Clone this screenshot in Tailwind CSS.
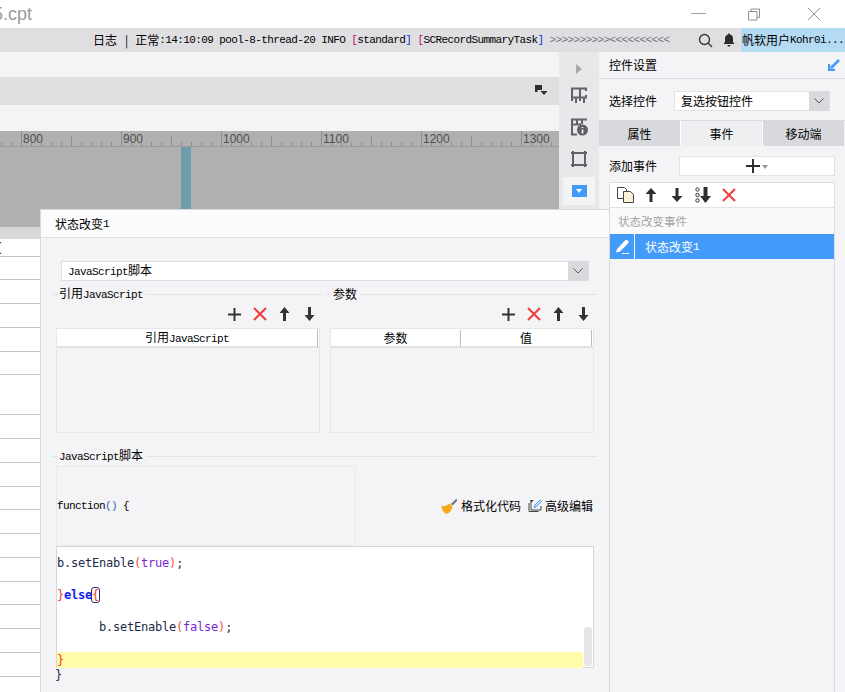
<!DOCTYPE html>
<html lang="zh">
<head>
<meta charset="utf-8">
<script src="https://cdn.jsdelivr.net/npm/@tailwindcss/browser@4"></script>
</head>
<body class="bg-white">
<div class="relative flex flex-col w-[845px] h-[692px] overflow-hidden bg-[#f4f4f6] text-black text-[12px] leading-[16px] font-['Noto_Sans_CJK_SC','Liberation_Sans',sans-serif]">

  <!-- title bar -->
  <div class="flex items-center h-[28px] bg-white shrink-0">
    <span class="-ml-[7px] text-[18px] leading-[28px] text-[#9a9a9a] font-['Liberation_Sans',sans-serif]">5.cpt</span>
    <div class="flex items-center ml-auto pr-[23px]">
      <svg class="w-[15px] h-[15px]" viewBox="0 0 15 15"><path d="M0 6.5h15" stroke="#a0a0a0" stroke-width="1"/></svg>
      <svg class="ml-[41px] w-[15px] h-[15px]" viewBox="0 0 15 15" fill="none" stroke="#909090"><path d="M1.5 4.500h8.500v8.500h-8.500z"/><path d="M4 4.500v-2.500h8.500v8.500h-2.500"/></svg>
      <svg class="ml-[45px] w-[15px] h-[15px]" viewBox="0 0 15 15" fill="none" stroke="#909090"><path d="M1 1l12 12M13 1L1 13"/></svg>
    </div>
  </div>

  <!-- log bar -->
  <div class="flex items-center h-[24px] bg-[#dfdfe1] shrink-0 whitespace-nowrap">
    <div class="flex items-center pl-[93px] w-[741px]">
      <span>日志</span><span class="mx-[8px]">|</span><span class="-ml-[1px]">正常</span>
      <span class="font-['Liberation_Mono'] text-[11px] tracking-[-0.6px] whitespace-pre">:14:10:09 pool-8-thread-20 INFO <span class="text-[#b0107c]">[</span>standard<span class="text-[#1c2ad0]">]</span> <span class="text-[#b0107c]">[</span>SCRecordSummaryTask<span class="text-[#1c2ad0]">]</span> <span class="text-[#77707f]">&gt;&gt;&gt;&gt;&gt;&gt;&gt;&gt;&gt;&gt;&lt;&lt;&lt;&lt;&lt;&lt;&lt;&lt;&lt;&lt;</span></span>
      <svg class="absolute left-[698px] top-[33px] w-[15px] h-[15px]" viewBox="0 0 15 15" fill="none" stroke="#333" stroke-width="1.300"><circle cx="6.500" cy="6.500" r="5"/><path d="M10.300 10.300l3.700 3.700"/></svg>
      <svg class="absolute left-[723px] top-[33px] w-[12px] h-[14px]" viewBox="0 0 12 14" fill="#2b2b2b"><path d="M6 0.500c.7 0 1 .5 1 1 2 .5 3 2 3 4v3.500l1.500 2h-11l1.500-2v-3.500c0-2 1-3.500 3-4 0-.5.300-1 1-1z"/><path d="M4.500 12h3c0 1-.6 1.600-1.500 1.600s-1.500-.6-1.500-1.600z"/></svg>
    </div>
    <div class="flex items-center h-full w-[104px] bg-[#b4dbf3] pl-[1px]">
      <span>帆软用户</span><span class="font-['Liberation_Mono'] text-[11px] tracking-[-0.6px]">Kohr0i...</span>
    </div>
  </div>

  <!-- main -->
  <div class="flex flex-1 min-h-0">
    <!-- left designer column -->
    <div class="flex flex-col w-[559px] shrink-0">
      <div class="h-[25px] bg-[#f4f4f6]"></div>
      <div class="flex items-center justify-end h-[28px] bg-[#dfdfe1] pr-[11px]">
        <svg class="w-[13px] h-[12px]" viewBox="0 0 13 12" fill="#2e2e2e"><path d="M0 0h7v2.500h-4.500v4.500h-2.500z"/><path d="M2 2h5v3h-5z"/><path d="M5.500 6h7l-3.500 4z"/></svg>
      </div>
      <div class="h-[26px] bg-[#f4f4f6]"></div>
      <!-- ruler -->
      <div class="relative flex h-[17px] bg-[#b0b0b0] border-b border-[#9a9a9a] overflow-hidden text-[#4f4f4f] font-['Liberation_Sans',sans-serif] leading-[16px]">
        <svg class="absolute left-0 bottom-0 w-[559px] h-[10px]" viewBox="0 0 559 10">
          <defs><pattern id="t" x="1" y="0" width="10" height="10" patternUnits="userSpaceOnUse"><path d="M.5 6v4" stroke="#8f8f8f"/></pattern>
          <pattern id="m" x="21" y="0" width="50" height="10" patternUnits="userSpaceOnUse"><path d="M.5 0v10" stroke="#8f8f8f"/></pattern></defs>
          <rect width="559" height="10" fill="url(#t)"/><rect width="559" height="10" fill="url(#m)"/>
        </svg>
        <div class="w-[21px] shrink-0"></div>
        <div class="relative w-[100px] shrink-0 border-l border-[#8f8f8f] pl-[1px]">800</div>
        <div class="relative w-[100px] shrink-0 border-l border-[#8f8f8f] pl-[1px]">900</div>
        <div class="relative w-[100px] shrink-0 border-l border-[#8f8f8f] pl-[1px]">1000</div>
        <div class="relative w-[100px] shrink-0 border-l border-[#8f8f8f] pl-[1px]">1100</div>
        <div class="relative w-[100px] shrink-0 border-l border-[#8f8f8f] pl-[1px]">1200</div>
        <div class="relative w-[38px] shrink-0 border-l border-[#8f8f8f] pl-[1px]">1300</div>
      </div>
      <!-- canvas -->
      <div class="flex h-[80px] bg-[#b0b0b0]">
        <div class="ml-[181px] w-[10px] bg-[#6f9dac]"></div>
      </div>
      <div class="h-[12px] bg-[#d8d8da]"></div>
      <!-- grid rows behind dialog -->
      <div class="flex flex-col w-[40px] bg-white font-['Liberation_Mono'] font-bold">
        <div class="h-[18px] -ml-[5px] leading-[18px] border-b border-[#c4c4c4] w-[45px]">[</div>
        <div class="h-[23px] border-b border-[#c4c4c4]"></div>
        <div class="h-[24px] border-b border-[#c4c4c4]"></div>
        <div class="h-[24px] border-b border-[#c4c4c4]"></div>
        <div class="h-[24px] border-b border-[#c4c4c4]"></div>
        <div class="h-[23px] border-b border-[#c4c4c4]"></div>
        <div class="h-[40px] border-b border-[#c4c4c4]"></div>
        <div class="h-[24px] border-b border-[#c4c4c4]"></div>
        <div class="h-[24px] border-b border-[#c4c4c4]"></div>
        <div class="h-[24px] border-b border-[#c4c4c4]"></div>
        <div class="h-[23px] border-b border-[#c4c4c4]"></div>
        <div class="h-[24px] border-b border-[#c4c4c4]"></div>
        <div class="h-[24px] border-b border-[#c4c4c4]"></div>
        <div class="h-[24px] border-b border-[#c4c4c4]"></div>
        <div class="h-[23px] border-b border-[#c4c4c4]"></div>
        <div class="h-[24px] border-b border-[#c4c4c4]"></div>
        <div class="h-[24px] border-b border-[#c4c4c4]"></div>
        <div class="h-[24px] border-b border-[#c4c4c4]"></div>
        <div class="h-[15px]"></div>
      </div>
    </div>

    <!-- icon strip -->
    <div class="flex flex-col items-center w-[40px] bg-[#e8e8ea] shrink-0 pt-[12px]">
      <svg class="w-[6px] h-[10px]" viewBox="0 0 6 10" fill="#a8a8a8"><path d="M0 0l6 5-6 5z"/></svg>
      <svg class="mt-[13px] w-[18px] h-[18px]" viewBox="0 0 18 18" fill="none" stroke="#606368" stroke-width="2"><path d="M1 1.500h16M1 10.500h16M2 1v13M10 1v13M16 1v3M16 8v3M6 11v5M14 11v5"/></svg>
      <svg class="mt-[13px] w-[18px] h-[18px]" viewBox="0 0 18 18"><path d="M1 1.500h16M1 6.500h10M2 1v16M1 16.500h6M7 2v4M12 2v4" fill="none" stroke="#606368" stroke-width="2"/><circle cx="12.500" cy="12" r="5.500" fill="#5c6066"/><path d="M12.500 9v1M12.500 11.500v4" stroke="#fff" stroke-width="1.600"/></svg>
      <svg class="mt-[15px] w-[16px] h-[16px]" viewBox="0 0 16 16" fill="none" stroke="#606368" stroke-width="2"><path d="M2 0v16M14 0v16M0 2h16M0 14h16"/></svg>
      <div class="flex items-center justify-center mt-[10px] w-[32px] h-[28px] bg-[#f4f4f6]">
        <div class="flex items-center justify-center w-[15px] h-[12px] bg-[#429bf8]">
          <svg class="w-[6px] h-[4px]" viewBox="0 0 6 4" fill="#fff"><path d="M0 0h6l-3 4z"/></svg>
        </div>
      </div>
    </div>

    <!-- right panel -->
    <div class="flex flex-col flex-1 min-w-0 bg-[#f4f4f6]">
      <div class="flex items-center justify-between h-[27px] pl-[10px] pr-[5px] border-b border-[#dcdde0] shrink-0">
        <span>控件设置</span>
        <svg class="w-[12px] h-[12px]" viewBox="0 0 12 12" fill="none"><path d="M11 1L3 9" stroke="#429bf8" stroke-width="2.500"/><path d="M1 5v6h6" stroke="#429bf8" stroke-width="2.500"/></svg>
      </div>
      <div class="flex items-center h-[42px] pl-[10px] pt-[2px] border-b border-[#dcdde0] shrink-0">
        <span>选择控件</span>
        <div class="flex items-center ml-[17px] w-[156px] h-[20px] bg-white border border-[#e2e3e5]">
          <span class="pl-[6px] flex-1">复选按钮控件</span>
          <div class="flex items-center justify-center w-[20px] h-[20px] bg-[#d8d9dc]">
            <svg class="w-[10px] h-[6px]" viewBox="0 0 10 6" fill="none" stroke="#55585c"><path d="M.5.500l4.500 4.500 4.500-4.500"/></svg>
          </div>
        </div>
      </div>
      <div class="flex h-[25px] text-center leading-[25px] shrink-0">
        <div class="w-[81px] bg-[#d8d9dc]">属性</div>
        <div class="w-[83px] bg-[#eeeff1] border-x border-white">事件</div>
        <div class="w-[81px] bg-[#d8d9dc]">移动端</div>
      </div>
      <div class="flex items-center h-[36px] pl-[10px] shrink-0 pt-[4px]">
        <span>添加事件</span>
        <div class="flex items-center justify-center ml-[22px] w-[156px] h-[20px] bg-white border border-[#e2e3e5]">
          <svg class="w-[14px] h-[14px]" viewBox="0 0 14 14" fill="#2e2e2e"><path d="M6 0h2v6h6v2h-6v6h-2v-6h-6v-2h6z"/></svg>
          <svg class="ml-[2px] mt-[2px] w-[6px] h-[4px]" viewBox="0 0 6 4" fill="#999"><path d="M0 0h6l-3 4z"/></svg>
        </div>
      </div>
      <div class="flex flex-col ml-[10px] w-[226px] flex-1 min-h-0 border border-[#dcdde0] border-b-0">
        <div class="flex items-center h-[25px] bg-white border-b border-[#e2e3e5] pl-[7px] shrink-0">
          <svg class="w-[18px] h-[16px]" viewBox="0 0 18 16"><path d="M.5.500h7l2 2v9h-9z" fill="#fff" stroke="#444"/><path d="M6.500 4.500h7l3 3v8h-10z" fill="#fbf1d9" stroke="#444"/></svg>
          <svg class="ml-[10px] w-[12px] h-[14px]" viewBox="0 0 12 14" fill="#2e2e2e"><path d="M6 0l5.500 6h-4v8h-3v-8h-4z"/></svg>
          <svg class="ml-[14px] w-[12px] h-[14px]" viewBox="0 0 12 14" fill="#2e2e2e"><path d="M6 14l5.500-6h-4v-8h-3v8h-4z"/></svg>
          <svg class="ml-[12px] w-[16px] h-[16px]" viewBox="0 0 16 16"><g fill="none" stroke="#333"><circle cx="2.500" cy="2.500" r="1.700"/><circle cx="2.500" cy="8" r="1.700"/><circle cx="2.500" cy="13.500" r="1.700"/></g><path d="M10.500 16l5.500-7h-3.500v-9h-4v9h-3.500z" fill="#2e2e2e"/></svg>
          <svg class="ml-[11px] w-[14px] h-[14px]" viewBox="0 0 14 14" fill="none" stroke="#ee4444" stroke-width="2.200"><path d="M1 1l12 12M13 1L1 13"/></svg>
        </div>
        <div class="flex items-center h-[26px] bg-[#fafafb] pl-[8px] text-[11.500px] text-[#a3a3a3] shrink-0">状态改变事件</div>
        <div class="flex h-[25px] bg-[#429bf8] text-white shrink-0">
          <div class="flex items-center justify-center w-[25px] border-r border-white">
            <svg class="w-[15px] h-[15px]" viewBox="0 0 15 15" fill="#fff"><path d="M2 10L10 1.500c1-.8 2.500-.6 3.200.3.600.8.400 2-.2 2.700L5 12.500l-4 1z"/><path d="M7 14.500h7" stroke="#fff"/></svg>
          </div>
          <div class="flex items-center pl-[10px]"><span>状态改变</span><span class="font-['Liberation_Mono'] text-[11px] tracking-[-0.6px]">1</span></div>
        </div>
      </div>
    </div>
  </div>

  <!-- dialog -->
  <div class="absolute left-[40px] top-[209px] flex flex-col w-[570px] h-[483px] bg-[#f4f4f6] border-x border-t border-[#d8d8da]">
    <div class="flex items-center h-[28px] pl-[14px] bg-[#fcfcfc] border-b border-[#dcdde0] shrink-0">
      <span>状态改变</span><span class="font-['Liberation_Mono'] text-[11px] tracking-[-0.6px]">1</span>
    </div>

    <!-- JS combobox -->
    <div class="flex items-center mt-[23px] ml-[20px] w-[528px] h-[20px] bg-white border border-[#dcdde0] shrink-0">
      <span class="flex-1 pl-[6px]"><span class="font-['Liberation_Mono'] text-[11px] tracking-[-0.6px]">JavaScript</span>脚本</span>
      <div class="flex items-center justify-center w-[20px] h-[20px] bg-[#d8d9dc]">
        <svg class="w-[10px] h-[6px]" viewBox="0 0 10 6" fill="none" stroke="#55585c"><path d="M.5.500l4.500 4.500 4.500-4.500"/></svg>
      </div>
    </div>

    <!-- legends -->
    <div class="flex mt-[6px] ml-[12px] w-[544px] h-[14px] gap-[4px] shrink-0">
      <div class="flex items-center w-[270px]">
        <div class="w-[5px] h-px bg-[#e2e3e5]"></div>
        <span class="px-[1px] whitespace-nowrap">引用<span class="font-['Liberation_Mono'] text-[11px] tracking-[-0.6px]">JavaScript</span></span>
        <div class="flex-1 h-px bg-[#e2e3e5] ml-[2px]"></div>
      </div>
      <div class="flex items-center flex-1">
        <div class="w-[5px] h-px bg-[#e2e3e5]"></div>
        <span class="px-[1px] mr-[2px]">参数</span>
        <div class="flex-1 h-px bg-[#e2e3e5]"></div>
      </div>
    </div>

    <!-- action icons -->
    <div class="flex mt-[4px] h-[18px] shrink-0">
      <div class="flex items-center justify-end w-[274px] gap-[12px]">
        <svg class="w-[13px] h-[13px]" viewBox="0 0 13 13" fill="#333"><path d="M5.500 0h2v5.500h5.500v2h-5.500v5.500h-2v-5.500h-5.500v-2h5.500z"/></svg>
        <svg class="w-[14px] h-[14px]" viewBox="0 0 14 14" fill="none" stroke="#ee4444" stroke-width="2.200"><path d="M1 1l12 12M13 1L1 13"/></svg>
        <svg class="w-[11px] h-[14px]" viewBox="0 0 11 14" fill="#333"><path d="M5.500 0l5 6h-3.500v8h-3v-8h-3.500z"/></svg>
        <svg class="w-[11px] h-[14px] ml-[2px]" viewBox="0 0 11 14" fill="#333"><path d="M5.500 14l5-6h-3.500v-8h-3v8h-3.500z"/></svg>
      </div>
      <div class="flex items-center justify-end w-[274px] gap-[12px]">
        <svg class="w-[13px] h-[13px]" viewBox="0 0 13 13" fill="#333"><path d="M5.500 0h2v5.500h5.500v2h-5.500v5.500h-2v-5.500h-5.500v-2h5.500z"/></svg>
        <svg class="w-[14px] h-[14px]" viewBox="0 0 14 14" fill="none" stroke="#ee4444" stroke-width="2.200"><path d="M1 1l12 12M13 1L1 13"/></svg>
        <svg class="w-[11px] h-[14px]" viewBox="0 0 11 14" fill="#333"><path d="M5.500 0l5 6h-3.500v8h-3v-8h-3.500z"/></svg>
        <svg class="w-[11px] h-[14px] ml-[2px]" viewBox="0 0 11 14" fill="#333"><path d="M5.500 14l5-6h-3.500v-8h-3v8h-3.500z"/></svg>
      </div>
    </div>

    <!-- tables -->
    <div class="flex mt-[5px] ml-[15px] gap-[10px] h-[105px] shrink-0">
      <div class="flex flex-col w-[264px] border border-[#e6e7e9]">
        <div class="flex h-[19px] bg-white border-b-2 border-[#e2e2e4] items-center text-center">
          <div class="w-[261px] border-r border-[#bdbdb4]">引用<span class="font-['Liberation_Mono'] text-[11px] tracking-[-0.6px]">JavaScript</span></div>
        </div>
      </div>
      <div class="flex flex-col w-[264px] border border-[#e6e7e9]">
        <div class="flex h-[19px] bg-white border-b-2 border-[#e2e2e4] items-center text-center">
          <div class="w-[130px] border-r border-[#bdbdb4]">参数</div>
          <div class="w-[131px] border-r border-[#bdbdb4]">值</div>
        </div>
      </div>
    </div>

    <!-- legend 2 -->
    <div class="flex items-center mt-[16px] ml-[12px] w-[544px] h-[14px] shrink-0">
      <div class="w-[5px] h-px bg-[#e2e3e5]"></div>
      <span class="px-[1px] whitespace-nowrap"><span class="font-['Liberation_Mono'] text-[11px] tracking-[-0.6px]">JavaScript</span>脚本</span>
      <div class="flex-1 h-px bg-[#e2e3e5] ml-[2px]"></div>
    </div>

    <!-- function row -->
    <div class="flex items-center mt-[3px] ml-[15px] w-[538px] h-[80px] shrink-0">
      <div class="flex items-center w-[300px] h-[80px] border border-[#e8e9eb]">
        <span class="font-['Liberation_Mono'] text-[11px] tracking-[-0.6px]">function<span class="text-[#2a63b0]">()</span> {</span>
      </div>
      <div class="flex items-center ml-auto">
        <svg class="w-[16px] h-[16px]" viewBox="0 0 16 16"><path d="M15.500 .5L10 6l1.500 1.500L16 3z" fill="#6f7378"/><path d="M.5 8c3 .5 5.500-.5 8-2.500l3 3c-.5 3-2 6-6 7.500C2.500 15 .5 11 .5 8z" fill="#f4ab1b"/></svg>
        <span class="ml-[4px]">格式化代码</span>
        <svg class="ml-[7px] w-[14px] h-[14px]" viewBox="0 0 14 14" fill="none"><path d="M4.500 2.500h-2v-1h3M1 4v8.500h9.500M3 3v8h10V7" stroke="#444"/><path d="M6 9l1-3 5-5 1.500 1.500-5 5z" fill="#cfe4fb" stroke="#429bf8"/></svg>
        <span class="ml-[3px] mr-[1px]">高级编辑</span>
      </div>
    </div>

    <!-- code editor -->
    <div class="relative ml-[15px] w-[538px] h-[122px] bg-white border border-[#d5d7da] pt-[8px] shrink-0 font-['DejaVu_Sans_Mono'] tracking-[-0.22px] text-[#1c2a4a]">
      <div class="h-[16px]">b.setEnable<span class="text-[#f4523b]">(</span><span class="text-[#7a26d0]">true</span><span class="text-[#f4523b]">)</span>;</div>
      <div class="h-[16px]"></div>
      <div class="h-[16px]"><span class="text-[#f43a1e]">}</span><span class="font-bold text-[#0f1cf0]">else</span><span class="text-[#f43a1e] outline outline-[#2a2f7a] rounded-[2px]">{</span></div>
      <div class="h-[16px]"></div>
      <div class="h-[16px] pl-[42px]">b.setEnable<span class="text-[#f4523b]">(</span><span class="text-[#7a26d0]">false</span><span class="text-[#f4523b]">)</span>;</div>
      <div class="h-[17px]"></div>
      <div class="h-[16px] w-[526px] bg-[#fffcaa] text-[#f43a1e]">}</div>
      <div class="absolute right-[1px] bottom-[1px] w-[8px] h-[39px] rounded-[3px] bg-[#e6e6e6]"></div>
    </div>

    <div class="ml-[14px] mt-[-1px] h-[16px] font-['DejaVu_Sans_Mono'] text-[#1c2a4a]">}</div>
  </div>
</div>
</body>
</html>
